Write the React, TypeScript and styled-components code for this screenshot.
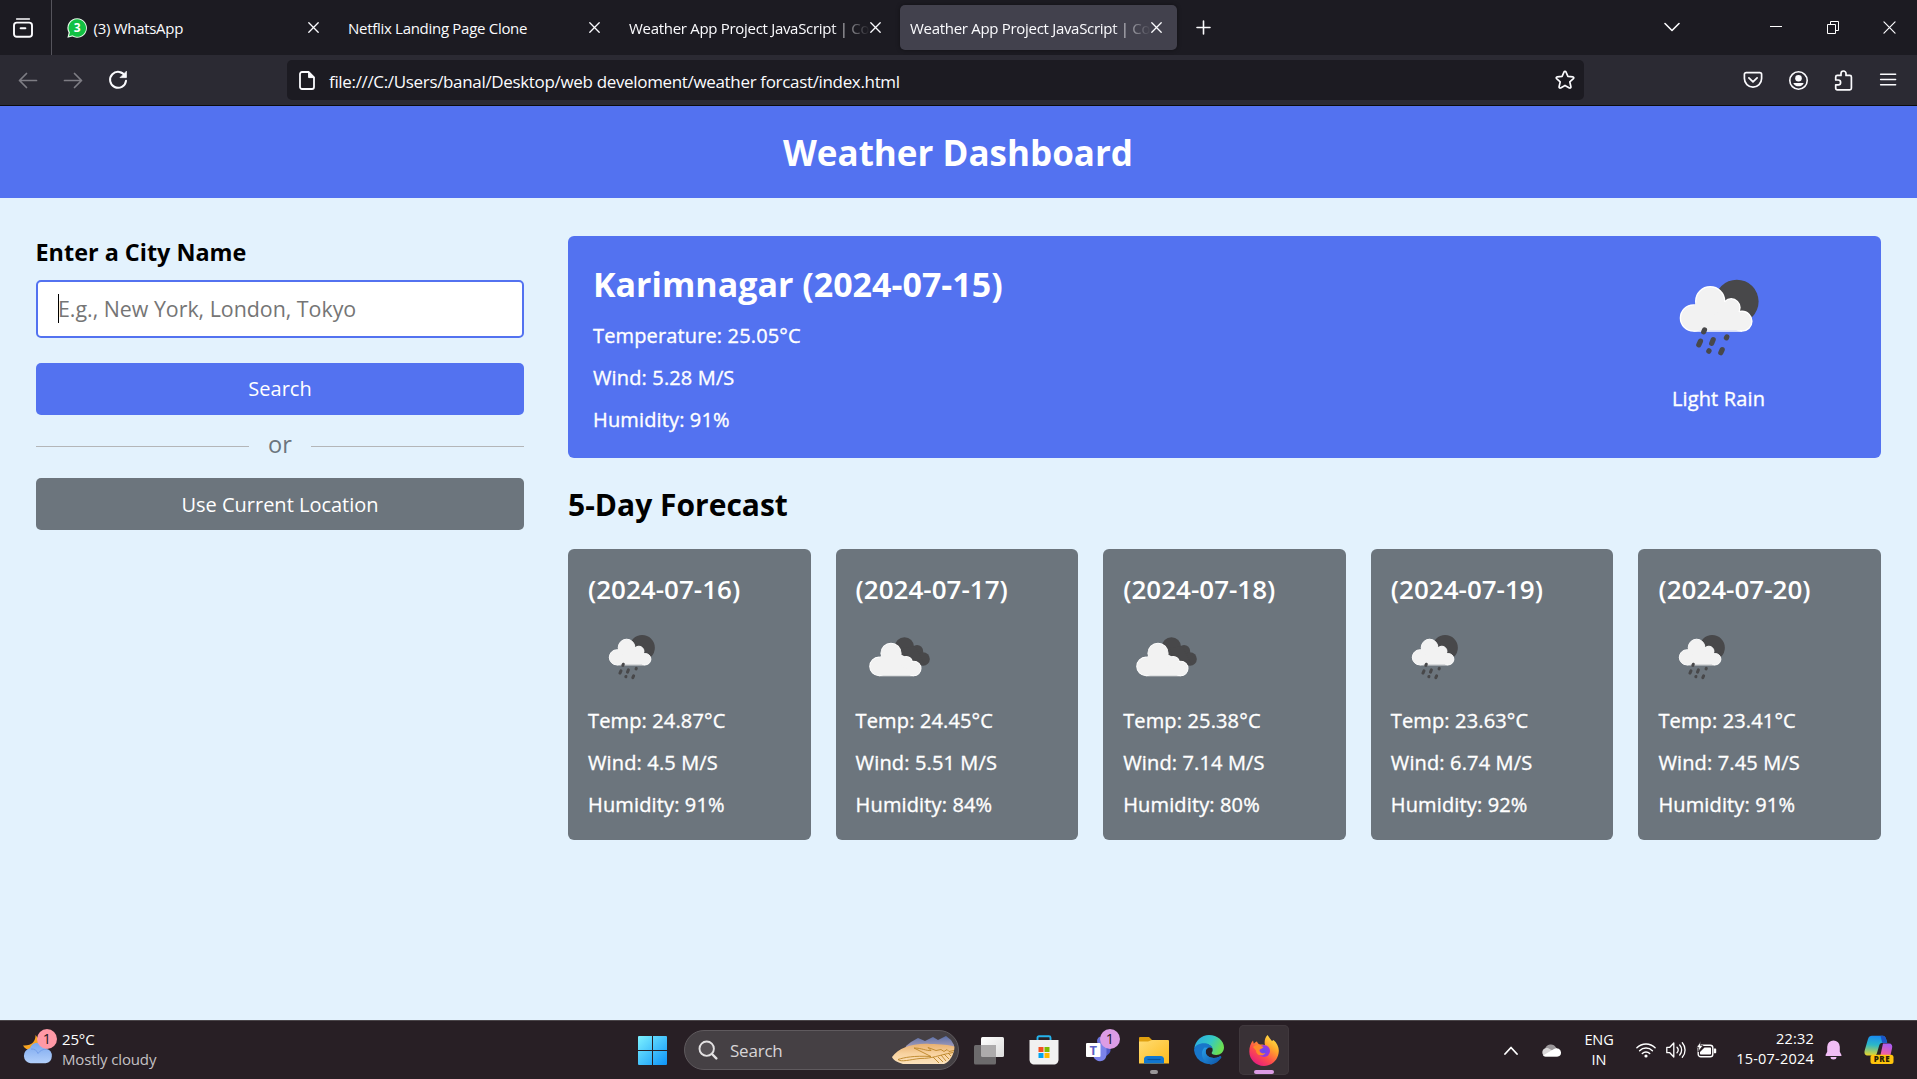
import React from "react";
import styled, { createGlobalStyle } from "styled-components";

const GlobalStyle = createGlobalStyle`
  * { margin: 0; padding: 0; box-sizing: border-box; }
  body { margin: 0; background: #e3f2fd; overflow: hidden; font-family: "Open Sans", sans-serif; }
  svg { display: block; flex: none; }
`;

const Screen = styled.div`
  width: 100vw;
  height: 100vh;
  display: flex;
  flex-direction: column;
  overflow: hidden;
  background: #e3f2fd;
`;

/* ---------- browser chrome ---------- */

const TabStrip = styled.div`
  flex: none;
  height: 55px;
  display: flex;
  align-items: center;
  background: #1c1b22;
  color: #fbfbfe;
`;

const ViewButton = styled.div`
  width: 52px;
  height: 55px;
  padding-left: 13px;
  display: flex;
  align-items: center;
  border-right: 1px solid #55545c;
  margin-right: 5px;
`;

const Tab = styled.div<{ $active?: boolean }>`
  width: 277px;
  height: 45px;
  margin-right: 4px;
  padding: 0 15px 0 10px;
  display: flex;
  align-items: center;
  border-radius: 5px;
  background: ${(p) => (p.$active ? "#42414d" : "transparent")};
  box-shadow: ${(p) => (p.$active ? "0 0 4px rgba(0,0,0,.4)" : "none")};
`;

const TabTitle = styled.span<{ $fade?: boolean }>`
  flex: 1;
  white-space: nowrap;
  font-size: 15px;
  line-height: 24px;
  letter-spacing: ${(p) => (p.$fade ? -0.3 : -0.29)}px;
  ${(p) => p.$fade && "mask-image: linear-gradient(to left, transparent, #000 40px);"}
`;

const TabFavicon = styled.div`
  margin-right: 6.5px;
`;

const NewTab = styled.div`
  margin-left: 15px;
`;

const WindowControls = styled.div`
  margin-left: auto;
  display: flex;
  align-items: center;
  padding: 0 21px 1px 0;
`;

const ControlGap = styled.div<{ $w: number }>`
  width: ${(p) => p.$w}px;
`;

const Toolbar = styled.div`
  flex: none;
  height: 51px;
  display: flex;
  align-items: center;
  background: #2b2a33;
  border-bottom: 1px solid #0c0c0d;
  color: #fbfbfe;
`;

const NavButtons = styled.div`
  width: 287px;
  padding-left: 18px;
  display: flex;
  gap: 25px;
`;

const UrlBar = styled.div`
  width: 1297px;
  height: 40px;
  padding: 0 9px 0 12px;
  display: flex;
  align-items: center;
  border-radius: 5px;
  background: #1c1b22;
`;

const UrlText = styled.span`
  flex: 1;
  margin-left: 14px;
  padding-top: 3px;
  font-size: 17px;
  letter-spacing: -0.335px;
  white-space: nowrap;
`;

const ToolbarIcons = styled.div`
  margin-left: auto;
  padding-right: 19px;
  display: flex;
  gap: 25px;
`;

/* ---------- page ---------- */

const PageTitle = styled.h1`
  flex: none;
  height: 92px;
  padding: 23px 1px 0 0;
  background: #5372f0;
  color: #fff;
  font-size: 35px;
  font-weight: 700;
  line-height: 47px;
  text-align: center;
`;

const Container = styled.div`
  flex: 1;
  min-height: 0;
  display: flex;
  gap: 44px;
  padding: 38px 36px 0;
`;

const InputColumn = styled.div`
  width: 488px;
  display: flex;
  flex-direction: column;
`;

const Label = styled.h3`
  margin-left: -0.5px;
  font-size: 23.4px;
  font-weight: 700;
  line-height: 32px;
`;

const CityField = styled.div`
  height: 58px;
  margin: 12px 0 25px;
  padding-left: 20px;
  display: flex;
  align-items: center;
  border: 2px solid #5372f0;
  border-radius: 5px;
  background: #fff;
`;

const Caret = styled.span`
  width: 1px;
  height: 29px;
  margin: 0 -1px 1px 0;
  background: #000;
`;

const Placeholder = styled.span`
  margin-bottom: 2px;
  font-size: 21.4px;
  line-height: 29px;
  letter-spacing: -0.02px;
  color: #757575;
`;

const Button = styled.div<{ $bg: string; $drop?: number }>`
  height: 52px;
  padding-top: ${(p) => p.$drop ?? 0}px;
  border-radius: 5px;
  background: ${(p) => p.$bg};
  color: #fff;
  font-size: 20px;
  line-height: 52px;
  text-align: center;
`;

const Separator = styled.div`
  height: 63px;
  display: flex;
  align-items: center;
  gap: 19px;
  color: #6c757d;
`;

const Rule = styled.div`
  flex: 1;
  height: 1px;
  background: #b4b6b8;
`;

const Or = styled.span`
  font-size: 23.6px;
  line-height: 32px;
  margin-top: -5px;
`;

const WeatherColumn = styled.div`
  flex: 1;
`;

const CurrentCard = styled.div`
  height: 222px;
  padding: 25px 87.5px 25px 25px;
  display: flex;
  justify-content: space-between;
  border-radius: 6px;
  background: #5372f0;
  color: #fff;
`;

const City = styled.h2`
  font-size: 34px;
  font-weight: 700;
  line-height: 46px;
`;

const Stat = styled.h6`
  margin-top: 15px;
  font-size: 20px;
  font-weight: 500;
  line-height: 27px;
  letter-spacing: 0.14px;
  -webkit-text-stroke: 0.35px #fff;
  white-space: nowrap;
`;

const CurrentIcon = styled.div`
  width: 150px;
  margin-top: -19px;
  text-align: center;
`;

const Condition = styled(Stat)`
  margin-top: -7px;
`;

const ForecastTitle = styled.h2`
  height: 91px;
  padding-top: 25.5px;
  font-size: 30px;
  font-weight: 700;
  line-height: 41px;
`;

const ForecastList = styled.div`
  display: grid;
  grid-template-columns: repeat(5, 1fr);
  gap: 25px;
`;

const ForecastCard = styled.div`
  height: 291px;
  padding: 22px 20px;
  border-radius: 6px;
  background: #6c757d;
  color: #fff;
`;

const ForecastDate = styled.h3`
  font-size: 26px;
  font-weight: 600;
  line-height: 36px;
`;

const ForecastIcon = styled.div`
  height: 85px;
  padding-top: 6.3px;
`;

/* ---------- taskbar ---------- */

const Taskbar = styled.div`
  flex: none;
  height: 59px;
  display: flex;
  align-items: center;
  background: #281f25;
  border-top: 1px solid #4a4549;
  color: #fff;
`;

const Widget = styled.div`
  width: 638px;
  padding-left: 22px;
  display: flex;
  align-items: center;
`;

const WidgetText = styled.div`
  margin: 0 0 3px 4px;
  font-size: 15px;
  line-height: 20px;
  letter-spacing: -0.14px;
`;

const Muted = styled.div`
  color: #c5c1c4;
`;

const SearchPill = styled.div`
  width: 275px;
  height: 40px;
  margin: 0 5px 0 17px;
  padding: 0 3px 0 13px;
  display: flex;
  align-items: center;
  border-radius: 20px;
  border: 1px solid #5f5a5e;
  background: #454044;
`;

const SearchLabel = styled.span`
  flex: 1;
  margin-left: 12px;
  font-size: 17px;
  color: #d8d5d7;
  letter-spacing: -0.22px;
`;

const AppSlot = styled.div<{ $active?: boolean }>`
  width: 50px;
  height: 50px;
  margin-right: 5px;
  position: relative;
  display: flex;
  align-items: center;
  justify-content: center;
  border-radius: 5px;
  background: ${(p) => (p.$active ? "#393136" : "transparent")};
  box-shadow: ${(p) => (p.$active ? "inset 0 0 0 1px #40383d" : "none")};
`;

const RunningMark = styled.div<{ $w: number; $color: string }>`
  position: absolute;
  bottom: 1px;
  width: ${(p) => p.$w}px;
  height: 4px;
  border-radius: 2px;
  background: ${(p) => p.$color};
`;

const Tray = styled.div`
  margin-left: auto;
  padding-right: 23px;
  display: flex;
  align-items: center;
`;

const TrayText = styled.div<{ $align: string; $w: number; $spacing?: number; $lift?: number }>`
  width: ${(p) => p.$w}px;
  margin-bottom: ${(p) => p.$lift ?? 0}px;
  font-size: 14.5px;
  line-height: 20px;
  letter-spacing: ${(p) => p.$spacing ?? 0}px;
  text-align: ${(p) => p.$align};
  white-space: nowrap;
`;

const TrayGap = styled.div<{ $w: number }>`
  width: ${(p) => p.$w}px;
`;

/* ---------- drawings ---------- */

const CloseIcon = ({ s = 11, w = 1.3 }: { s?: number; w?: number }) => (
  <svg width={s} height={s} viewBox="0 0 11 11" stroke="#fbfbfe" strokeWidth={w} strokeLinecap="round">
    <path d="M.8.8l9.4 9.4M10.2.8L.8 10.2" />
  </svg>
);

const RainIcon = ({ size }: { size: number }) => (
  <svg width={size} height={size} viewBox="0 0 150 150">
    <circle cx="92.8" cy="59.5" r="21.8" fill="#48484a" />
    <g fill="#f2f2f2" stroke="#fff" strokeWidth="1.6">
      <circle cx="49.5" cy="76" r="13" />
      <circle cx="66.2" cy="59.3" r="14.4" />
      <circle cx="87.2" cy="65.6" r="8.7" />
      <circle cx="98" cy="79.2" r="9.8" />
      <path d="M49.5 89H98" />
    </g>
    <path fill="#f2f2f2" d="M49.5 64L53 60L79 59L84 62L93 68L96 71V88.4H49.5L44 80Z" />
    <circle cx="49.5" cy="76" r="12.3" fill="#f2f2f2" />
    <circle cx="66.2" cy="59.3" r="13.7" fill="#f2f2f2" />
    <circle cx="87.2" cy="65.6" r="8" fill="#f2f2f2" />
    <circle cx="98" cy="79.2" r="9.1" fill="#f2f2f2" />
    <path
      stroke="#48484a"
      strokeWidth="5.2"
      strokeLinecap="round"
      fill="none"
      d="M60.5 87.9l-.8 2M56.5 99.2l-1.7 3.7M69.2 97.6l-1.5 3.8M82.8 95l-.4.9M65 108.8l-.2.4M78.2 107.6l-1.4 3.1"
    />
  </svg>
);

const CloudsIcon = ({ size }: { size: number }) => (
  <svg width={size} height={size} viewBox="0 0 150 150">
    <g fill="#48484a">
      <circle cx="83" cy="58" r="16.5" />
      <circle cx="104.7" cy="65.4" r="10.4" />
      <circle cx="115" cy="79" r="11.6" />
      <path d="M80 60l22-3 16 32H90z" />
    </g>
    <g fill="#f2f2f2" stroke="#fff" strokeWidth="1.8">
      <circle cx="39.5" cy="91.5" r="15.9" />
      <circle cx="60" cy="69" r="17.2" />
      <circle cx="86" cy="85" r="10.6" />
      <circle cx="99" cy="95" r="12.4" />
      <path d="M39.5 107.4H99" />
    </g>
    <path fill="#f2f2f2" d="M39.5 77L45 71L75 70L86 76L96 87L99 95V106.5H39.5L34 95Z" />
    <circle cx="39.5" cy="91.5" r="15" fill="#f2f2f2" />
    <circle cx="60" cy="69" r="16.3" fill="#f2f2f2" />
    <circle cx="86" cy="85" r="9.8" fill="#f2f2f2" />
    <circle cx="99" cy="95" r="11.5" fill="#f2f2f2" />
  </svg>
);

const ViewIcon = () => (
  <svg width="20" height="20" viewBox="0 0 20 20" fill="none" stroke="#fbfbfe" strokeWidth="1.9" strokeLinecap="round">
    <path d="M3.6 1h12.8" strokeWidth="1.4" />
    <rect x="1" y="4.6" width="18" height="14.2" rx="2.8" />
    <path d="M7.6 10.2h4.8" />
  </svg>
);

const WhatsAppIcon = () => (
  <svg width="20" height="20" viewBox="0 0 20 20">
    <path d="M10.2.2a9.8 9.8 0 1 1-4.8 18.4L.4 19.8l1.2-5A9.8 9.8 0 0 1 10.2.2z" fill="#e8fbea" />
    <path d="M10.2 1.3a8.7 8.7 0 1 1-4.6 16l-3.6 1 .9-3.7A8.7 8.7 0 0 1 10.2 1.3z" fill="#12c143" />
    <text x="10.3" y="14.4" fontSize="12" fontWeight="700" fontFamily="Open Sans" textAnchor="middle" fill="#fff">3</text>
  </svg>
);

const ArrowIcon = ({ flip }: { flip?: boolean }) => (
  <svg width="20" height="20" viewBox="0 0 20 20" fill="none" stroke="#7e7d84" strokeWidth="1.7" strokeLinecap="round" strokeLinejoin="round">
    <path d={flip ? "M1.5 10.5h17M11.5 3.5l7 7-7 7" : "M18.5 10.5h-17M8.5 3.5l-7 7 7 7"} />
  </svg>
);

const ReloadIcon = () => (
  <svg width="20" height="20" viewBox="0 0 20 20" fill="none" stroke="#fbfbfe" strokeWidth="2" strokeLinecap="round">
    <path d="M17.2 6.2A8 8 0 1 0 18 10.8" />
    <path d="M18.4 1.6v6h-6z" fill="#fbfbfe" strokeWidth=".8" strokeLinejoin="round" />
  </svg>
);

const PageIcon = () => (
  <svg width="16" height="19" viewBox="0 0 16 19" fill="none" stroke="#fbfbfe" strokeWidth="1.8" strokeLinejoin="round">
    <path d="M3 1h6.8L15 6.4V16a2 2 0 0 1-2 2H3a2 2 0 0 1-2-2V3a2 2 0 0 1 2-2z" />
    <path d="M9.6 1v5.6H15z" fill="#fbfbfe" strokeWidth="1" />
  </svg>
);

const StarIcon = () => (
  <svg width="20" height="20" viewBox="0 0 20 20" fill="none" stroke="#fbfbfe" strokeWidth="1.7" strokeLinejoin="round">
    <path d="M10 1.3c.5 0 .8.3 1 .7l1.9 4.4 4.9.5c1 .1 1.3 1.1.6 1.8l-3.6 3.2 1.1 4.8c.2 1-.7 1.7-1.5 1.2L10 15.4l-4.4 2.5c-.8.5-1.7-.2-1.5-1.2l1.1-4.8-3.6-3.2c-.7-.7-.4-1.7.6-1.8l4.9-.5L9 2c.2-.4.5-.7 1-.7z" />
  </svg>
);

const PocketIcon = () => (
  <svg width="20" height="20" viewBox="0 0 20 20" fill="none" stroke="#fbfbfe" strokeWidth="1.7" strokeLinecap="round" strokeLinejoin="round">
    <path d="M3.2 2.6h13.6c1 0 1.8.8 1.8 1.8v4.2a8.6 8.6 0 0 1-17.2 0V4.4c0-1 .8-1.8 1.8-1.8z" />
    <path d="M5.9 7.9L10 11.8l4.1-3.9" strokeWidth="1.8" />
  </svg>
);

const AccountIcon = () => (
  <svg width="20" height="20" viewBox="0 0 20 20">
    <circle cx="10.5" cy="10.5" r="8.7" fill="none" stroke="#fbfbfe" strokeWidth="1.6" />
    <circle cx="10.5" cy="8.2" r="3.3" fill="#fbfbfe" />
    <path d="M5.3 12.9h10.4c-.8 2.2-2.8 3.4-5.2 3.4s-4.4-1.2-5.2-3.4z" fill="#fbfbfe" />
  </svg>
);

const ExtensionIcon = () => (
  <svg width="20" height="21" viewBox="0 0 20 21" fill="none" stroke="#fbfbfe" strokeWidth="1.7" strokeLinejoin="round">
    <path d="M8 5.4V3.5a2.5 2.5 0 0 1 5 0v1.9h3.8c1 0 1.6.7 1.6 1.6v11.2c0 1-.6 1.6-1.6 1.6H4.3c-1 0-1.6-.7-1.6-1.6v-3.4h2.5a2.4 2.4 0 0 0 0-4.8H2.7V7c0-1 .6-1.6 1.6-1.6z" />
  </svg>
);

const MenuIcon = () => (
  <svg width="20" height="20" viewBox="0 0 20 20" stroke="#fbfbfe" strokeWidth="1.5" strokeLinecap="round">
    <path d="M2.6 4.2h15M2.6 9.5h15M2.6 14.8h15" />
  </svg>
);

const WeatherWidgetIcon = () => (
  <svg width="36" height="42" viewBox="0 0 36 42">
    <defs>
      <linearGradient id="wc" x1="0" y1="0" x2="0" y2="1">
        <stop offset="0" stopColor="#7aa7ee" />
        <stop offset="1" stopColor="#b3d0fb" />
      </linearGradient>
    </defs>
    <path d="M13.5 6c.3 6-3.5 11-12.5 10.5C4 23 17 23 20 14z" fill="#f8a420" />
    <path d="M8.6 34.3a7.6 7.6 0 0 1-.6-15A8.6 8.6 0 0 1 24.2 19.8 7.4 7.4 0 0 1 23.6 34.3z" fill="url(#wc)" />
    <path d="M9 20a7 7 0 0 1 7 4.5c2-3 5-4.5 9-4.3" fill="none" stroke="#6f9be8" strokeWidth=".9" />
    <circle cx="25" cy="10" r="10" fill="#ff99a6" />
    <text x="25" y="15" fontSize="14.5" fontFamily="Open Sans" textAnchor="middle" fill="#231a1e">1</text>
  </svg>
);

const StartIcon = () => (
  <svg width="29" height="29" viewBox="0 0 29 29">
    <defs>
      <linearGradient id="win" x1="0" y1="0" x2="29" y2="29" gradientUnits="userSpaceOnUse">
        <stop offset="0" stopColor="#7df2ff" />
        <stop offset="1" stopColor="#0d93f8" />
      </linearGradient>
    </defs>
    <path fill="url(#win)" d="M1 0h13v14H0V1a1 1 0 0 1 1-1zM15 0h13a1 1 0 0 1 1 1v13H15zM0 15h14v14H1a1 1 0 0 1-1-1zM15 15h14v13a1 1 0 0 1-1 1H15z" />
  </svg>
);

const SearchIcon = () => (
  <svg width="20" height="20" viewBox="0 0 20 20" fill="none" stroke="#e3e1e2" strokeLinecap="round">
    <circle cx="8.7" cy="8.7" r="7.2" strokeWidth="1.9" fill="#565155" />
    <path d="M14 14l4.3 4.4" strokeWidth="2.4" />
  </svg>
);

const DesertArt = () => (
  <svg width="63" height="30" viewBox="0 0 63 30">
    <defs>
      <linearGradient id="mt" x1="0" y1="0" x2="0" y2="1">
        <stop offset="0" stopColor="#5a6fa8" />
        <stop offset="1" stopColor="#b9a9bd" />
      </linearGradient>
      <linearGradient id="sand" x1="0" y1="0" x2="0" y2="1">
        <stop offset="0" stopColor="#e8b070" />
        <stop offset=".5" stopColor="#f8d3a0" />
        <stop offset="1" stopColor="#fce2bc" />
      </linearGradient>
    </defs>
    <path d="M14 11l5-4 7-4 7 3 8-4 5 3 8-4 5 4 3 5v5H13z" fill="url(#mt)" />
    <path d="M0 22C7 13 20 8 38 9c11 0 19 1 24.500 2.500C62.500 19 58 27 52 29H11C5 27 1 25 0 22z" fill="url(#sand)" />
    <path
      d="M6 24.500c6-2 16-4 33-3l-8-4-9-4.500c8 0 12 3 17 2.500l-3-3 8 3 5-1 3 2 3-2 2 2 5-1M6 24.500c3 3 12 0 22-1 13 0 17-3 33-6M41 22l6 6m-1-6l5 5m-2-7l5 6m-2-7l5 5m-1-6l3 3"
      fill="none"
      stroke="#bb8427"
      strokeWidth=".9"
    />
  </svg>
);

const TaskViewIcon = () => (
  <svg width="30" height="29" viewBox="0 0 30 29">
    <defs>
      <linearGradient id="tv" x1="0" y1="0" x2="1" y2="1">
        <stop offset="0" stopColor="#fff" />
        <stop offset="1" stopColor="#dcdcdc" />
      </linearGradient>
    </defs>
    <rect x="7" y="1" width="23" height="20" rx="1.5" fill="url(#tv)" />
    <rect x="0" y="9" width="22" height="19.5" rx="1.5" fill="#6c6a6c" />
    <path d="M7 9h15v12H8.5a1.5 1.5 0 0 1-1.5-1.5z" fill="#adabac" />
  </svg>
);

const StoreIcon = () => (
  <svg width="30" height="30" viewBox="0 0 30 30">
    <path d="M8.5 7V2.8c0-1 .6-1.500 1.500-1.500h10c1 0 1.500.6 1.500 1.500V7" fill="none" stroke="#25b3ec" strokeWidth="1.9" />
    <path d="M.5 5h29v19.500c0 3-2 5-5 5h-19c-3 0-5-2-5-5z" fill="#f1f1f1" />
    <path fill="#f25022" d="M9.500 12h5v5h-5z" />
    <path fill="#7fba00" d="M15.500 12h5v5h-5z" />
    <path fill="#00a4ef" d="M9.500 18h5v5h-5z" />
    <path fill="#ffb900" d="M15.500 18h5v5h-5z" />
  </svg>
);

const TeamsIcon = () => (
  <svg width="42" height="42" viewBox="0 0 42 42">
    <path d="M24 15h8.500v7a7 7 0 0 1-8.500 5z" fill="#5059c9" />
    <circle cx="23.500" cy="12" r="4.500" fill="#6a72dc" />
    <path d="M15 15h13.500v10c0 9-10.500 9-13 3z" fill="#7b83eb" />
    <rect x="8" y="14" width="14.500" height="14" rx="1" fill="#fff" />
    <text x="15.300" y="25.700" fontSize="13" fontWeight="700" fontFamily="Open Sans" textAnchor="middle" fill="#5b5fc7">T</text>
    <circle cx="32" cy="10" r="10" fill="#dc9ce5" />
    <text x="32" y="15" fontSize="14.500" fontFamily="Open Sans" textAnchor="middle" fill="#231a26">1</text>
  </svg>
);

const FolderIcon = () => (
  <svg width="30" height="28" viewBox="0 0 30 28">
    <defs>
      <linearGradient id="fo" x1="0" y1="0" x2="1" y2="1">
        <stop offset="0" stopColor="#ffdc73" />
        <stop offset="1" stopColor="#fdbb1c" />
      </linearGradient>
    </defs>
    <path d="M0 2a1 1 0 0 1 1-1h9l3 3v7H0z" fill="#e0a00f" />
    <path d="M0 5.500h9l4-1.500h16a1 1 0 0 1 1 1v22.500H0z" fill="url(#fo)" />
    <path d="M5 27.500v-5A3 3 0 0 1 8 20h14a3 3 0 0 1 3 2.500v5z" fill="#1177d1" />
    <path d="M8.500 23.500h13" stroke="#0a559e" strokeWidth="1.2" />
  </svg>
);

const EdgeIcon = () => (
  <svg width="30" height="30" viewBox="0 0 30 30">
    <defs>
      <linearGradient id="e1" x1="0" y1="0" x2="1" y2=".4">
        <stop offset="0" stopColor="#2aa8e8" />
        <stop offset=".6" stopColor="#35c9c4" />
        <stop offset="1" stopColor="#6adf54" />
      </linearGradient>
      <linearGradient id="e2" x1="0" y1="0" x2="1" y2="1">
        <stop offset="0" stopColor="#29a1e8" />
        <stop offset="1" stopColor="#0c4ea3" />
      </linearGradient>
    </defs>
    <path d="M.3 13.500C1.300 5.500 7.500 0 15 0c8.500 0 15 6 15 12.500 0 4.500-3.500 7.500-7.700 7.500-3.400 0-5-1.200-4.600-2.300 2.600-3 .1-8.500-5.700-8.500C6 9.200 1.500 11.500.3 13.500z" fill="url(#e1)" />
    <path d="M0 15C.5 10.500 5 8.300 10 8.300c3.500 0 8 2 8.500 5.200-2-1.900-7-.8-6.800 3.500.2 5 7.300 7.700 13.500 4.700 1.800-.9 2.600.2 1.700 1.400A15 15 0 0 1 0 15z" fill="#1876ca" />
    <path d="M10.500 12.500c-4.500 4-3.500 14 6.500 17.300a15 15 0 0 0 9.900-6.700c.9-1.200.1-2.300-1.700-1.400-6.200 3-13.300.3-13.500-4.700 0-2 1-3.600 2.500-4.200z" fill="url(#e2)" />
  </svg>
);

const FirefoxIcon = () => (
  <svg width="30" height="31" viewBox="0 0 30 31">
    <defs>
      <linearGradient id="f1" x1=".9" y1="0" x2=".2" y2="1">
        <stop offset="0" stopColor="#fff14f" />
        <stop offset=".35" stopColor="#ffa62b" />
        <stop offset=".65" stopColor="#ff4f4a" />
        <stop offset="1" stopColor="#e31587" />
      </linearGradient>
      <radialGradient id="f2">
        <stop offset="0" stopColor="#5b4ff0" />
        <stop offset="1" stopColor="#a033df" />
      </radialGradient>
    </defs>
    <path d="M18.500 0c2 2.500 2.500 4 4.500 6l1.500-1c3.500 3 5.500 7 5.300 11.200C29.500 24.500 23 31 15 31S.3 24.500.3 16.500C.3 12 1.500 8.500 4 5.500l.8 3.200C5.800 7.500 7 6.800 8 6.500c.4 1.500 1.500 2.500 3 3 2-.3 4 .1 5 .8C15 6.500 16 2.500 18.500 0z" fill="url(#f1)" />
    <circle cx="15" cy="16" r="6" fill="url(#f2)" />
    <path d="M4 12c3-2.500 6-2.300 8-1l2.500 1c-1 2-3.500 1.500-4 3 0 3 3 4 6 3-2 3.500-9 3.500-9.500-2.500z" fill="#ff8a2a" />
  </svg>
);

const OneDriveIcon = () => (
  <svg width="20" height="14" viewBox="0 0 20 14">
    <path d="M4 6A6 6 0 0 1 15 4.500L18 8 9 12z" fill="#9b979a" />
    <path d="M4.500 13.500a4.300 4.300 0 0 1 0-8.300c2-.4 4 .4 5 1.300l9.500 4.200c-.4 1.800-1.700 2.800-3.500 2.800z" fill="#d9d7d8" />
    <path d="M2 12.500L13 6a4.500 4.500 0 0 1 7 4c0 2-1.500 3.500-3.500 3.500h-12c-1 0-2-.4-2.500-1z" fill="#fff" />
  </svg>
);

const WifiIcon = () => (
  <svg width="20" height="16" viewBox="0 0 20 16" fill="none" stroke="#fff" strokeWidth="1.4" strokeLinecap="round">
    <path d="M.9 5.800a12.900 12.900 0 0 1 18.200 0M3.600 8.700a9 9 0 0 1 12.800 0M6.300 11.500a5.200 5.200 0 0 1 7.400 0" />
    <circle cx="10" cy="14" r="1.6" fill="#fff" stroke="none" />
  </svg>
);

const VolumeIcon = () => (
  <svg width="20" height="18" viewBox="0 0 20 18" fill="none" stroke="#fff" strokeWidth="1.3" strokeLinecap="round" strokeLinejoin="round">
    <path d="M.8 6.300h3l4-4.300v14l-4-4.300h-3zM11 6.300a4 4 0 0 1 0 5.400M13.700 4a7.500 7.500 0 0 1 0 10M16.300 1.700a11 11 0 0 1 0 14.600" />
  </svg>
);

const BatteryIcon = () => (
  <svg width="21" height="19" viewBox="0 0 21 19">
    <rect x="2.2" y="4.2" width="14.6" height="11.6" rx="2.6" fill="none" stroke="#fff" strokeWidth="1.4" />
    <path d="M17.800 7.500h1.400c.6 0 1 .4 1 1v2.800c0 .6-.4 1-1 1h-1.400z" fill="#fff" />
    <path d="M8.500 6.500h5.500c.7 0 1 .4 1 1v5.100c0 .7-.3 1-1 1H5c-.6 0-1-.3-1-1V11z" fill="#fff" />
    <path d="M4.800.3L.5 6.500h2.300L2 11l5-6.500H4.300z" fill="#fff" stroke="#281f25" strokeWidth=".7" />
  </svg>
);

const BellIcon = () => (
  <svg width="17" height="20" viewBox="0 0 17 20" fill="#f1bdf5">
    <path d="M8.500.5a6.300 6.300 0 0 1 6.300 6.300v5l1.700 3.300c.2.500 0 .9-.6.900H1.100c-.6 0-.8-.4-.6-.9l1.700-3.300v-5A6.300 6.300 0 0 1 8.500.5zM5.500 17h6a3 2.500 0 0 1-6 0z" />
  </svg>
);

const CopilotIcon = () => (
  <svg width="30" height="30" viewBox="0 0 30 30">
    <defs>
      <linearGradient id="c1" x1=".3" y1="0" x2=".2" y2="1">
        <stop offset="0" stopColor="#1a8cf0" />
        <stop offset=".45" stopColor="#2bb8c8" />
        <stop offset="1" stopColor="#e8d52a" />
      </linearGradient>
      <linearGradient id="c2" x1=".6" y1="0" x2=".3" y2="1">
        <stop offset="0" stopColor="#a95cf2" />
        <stop offset=".6" stopColor="#ee5fa5" />
        <stop offset="1" stopColor="#ff9a60" />
      </linearGradient>
    </defs>
    <path d="M8 .8h10.500c2.500 0 3.300 2 4 4.500l.7 2.500h-4.500c-2 0-3 1-3.600 3L13 18c-.5 1.800-1.500 2.500-3.300 2.500H4c-3 0-4-2-3.300-5L4 4C4.700 1.800 6 .8 8 .8z" fill="url(#c1)" />
    <path d="M16.500.8h2c2.500 0 3.300 2 4 4.500l.7 2.500h-5z" fill="#1b57c8" />
    <path d="M19 8.500h6c2.800 0 3.800 2 3 5l-1.500 6.500-2 5H13c2.500-1 3-3 3.600-5.500l1.400-6.500z" fill="url(#c2)" />
    <rect x="6.5" y="19.8" width="23" height="9.2" rx="2.5" fill="#ffc40c" />
    <text x="18" y="27.300" fontSize="8" fontWeight="800" fontFamily="Open Sans" textAnchor="middle" letterSpacing=".5" fill="#2a2006">PRE</text>
  </svg>
);

/* ---------- data ---------- */

const tabs = [
  { title: "(3) WhatsApp", icon: true },
  { title: "Netflix Landing Page Clone" },
  { title: "Weather App Project JavaScript | Co", fade: true },
  { title: "Weather App Project JavaScript | Co", fade: true, active: true },
];

const forecast = [
  { date: "2024-07-16", rain: true, temp: "24.87", wind: "4.5", humidity: 91 },
  { date: "2024-07-17", rain: false, temp: "24.45", wind: "5.51", humidity: 84 },
  { date: "2024-07-18", rain: false, temp: "25.38", wind: "7.14", humidity: 80 },
  { date: "2024-07-19", rain: true, temp: "23.63", wind: "6.74", humidity: 92 },
  { date: "2024-07-20", rain: true, temp: "23.41", wind: "7.45", humidity: 91 },
];

export default function App() {
  return (
    <Screen>
      <GlobalStyle />
      <TabStrip>
        <ViewButton>
          <ViewIcon />
        </ViewButton>
        {tabs.map((t, i) => (
          <Tab key={i} $active={t.active}>
            {t.icon && (
              <TabFavicon>
                <WhatsAppIcon />
              </TabFavicon>
            )}
            <TabTitle $fade={t.fade}>{t.title}</TabTitle>
            <CloseIcon />
          </Tab>
        ))}
        <NewTab>
          <svg width="15" height="15" viewBox="0 0 15 15" stroke="#fbfbfe" strokeWidth="1.6" strokeLinecap="round">
            <path d="M7.500 1v13M1 7.500h13" />
          </svg>
        </NewTab>
        <WindowControls>
          <svg width="16" height="10" viewBox="0 0 16 10" fill="none" stroke="#fbfbfe" strokeWidth="1.6" strokeLinecap="round" strokeLinejoin="round">
            <path d="M1 1.500l7 7 7-7" />
          </svg>
          <ControlGap $w={90} />
          <svg width="12" height="3" viewBox="0 0 12 3">
            <path d="M0 0h12v1H0z" fill="#fff" />
          </svg>
          <ControlGap $w={45} />
          <svg width="12" height="13" viewBox="0 0 12 13" fill="none" stroke="#fff">
            <path d="M.5 3.500h8v9h-8zM3.500 3.500v-3h8v9h-3" />
          </svg>
          <ControlGap $w={44} />
          <CloseIcon s={13} w={1} />
        </WindowControls>
      </TabStrip>
      <Toolbar>
        <NavButtons>
          <ArrowIcon />
          <ArrowIcon flip />
          <ReloadIcon />
        </NavButtons>
        <UrlBar>
          <PageIcon />
          <UrlText>file:///C:/Users/banal/Desktop/web develoment/weather forcast/index.html</UrlText>
          <StarIcon />
        </UrlBar>
        <ToolbarIcons>
          <PocketIcon />
          <AccountIcon />
          <ExtensionIcon />
          <MenuIcon />
        </ToolbarIcons>
      </Toolbar>

      <PageTitle>Weather Dashboard</PageTitle>
      <Container>
        <InputColumn>
          <Label>Enter a City Name</Label>
          <CityField>
            <Caret />
            <Placeholder>E.g., New York, London, Tokyo</Placeholder>
          </CityField>
          <Button $bg="#5372f0">Search</Button>
          <Separator>
            <Rule />
            <Or>or</Or>
            <Rule />
          </Separator>
          <Button $bg="#6c757d" $drop={1}>Use Current Location</Button>
        </InputColumn>
        <WeatherColumn>
          <CurrentCard>
            <div>
              <City>Karimnagar (2024-07-15)</City>
              <Stat>Temperature: 25.05°C</Stat>
              <Stat>Wind: 5.28 M/S</Stat>
              <Stat>Humidity: 91%</Stat>
            </div>
            <CurrentIcon>
              <RainIcon size={150} />
              <Condition>Light Rain</Condition>
            </CurrentIcon>
          </CurrentCard>
          <ForecastTitle>5-Day Forecast</ForecastTitle>
          <ForecastList>
            {forecast.map((d) => (
              <ForecastCard key={d.date}>
                <ForecastDate>({d.date})</ForecastDate>
                <ForecastIcon>{d.rain ? <RainIcon size={87.5} /> : <CloudsIcon size={87.5} />}</ForecastIcon>
                <Stat>Temp: {d.temp}°C</Stat>
                <Stat>Wind: {d.wind} M/S</Stat>
                <Stat>Humidity: {d.humidity}%</Stat>
              </ForecastCard>
            ))}
          </ForecastList>
        </WeatherColumn>
      </Container>

      <Taskbar>
        <Widget>
          <WeatherWidgetIcon />
          <WidgetText>
            <div>25°C</div>
            <Muted>Mostly cloudy</Muted>
          </WidgetText>
        </Widget>
        <StartIcon />
        <SearchPill>
          <SearchIcon />
          <SearchLabel>Search</SearchLabel>
          <DesertArt />
        </SearchPill>
        <AppSlot>
          <TaskViewIcon />
        </AppSlot>
        <AppSlot>
          <StoreIcon />
        </AppSlot>
        <AppSlot>
          <TeamsIcon />
        </AppSlot>
        <AppSlot>
          <FolderIcon />
          <RunningMark $w={8} $color="#9a9699" />
        </AppSlot>
        <AppSlot>
          <EdgeIcon />
        </AppSlot>
        <AppSlot $active>
          <FirefoxIcon />
          <RunningMark $w={20} $color="#dc9ce5" />
        </AppSlot>
        <Tray>
          <svg width="14" height="9" viewBox="0 0 14 9" fill="none" stroke="#fff" strokeWidth="1.8" strokeLinecap="round" strokeLinejoin="round">
            <path d="M1 8l6-6.500L13 8" />
          </svg>
          <TrayGap $w={23} />
          <OneDriveIcon />
          <TrayGap $w={18} />
          <TrayText $w={40} $align="center" $spacing={-0.1} $lift={1}>
            ENG
            <br />
            IN
          </TrayText>
          <TrayGap $w={17} />
          <WifiIcon />
          <TrayGap $w={10} />
          <VolumeIcon />
          <TrayGap $w={10} />
          <BatteryIcon />
          <TrayGap $w={17} />
          <TrayText $w={80} $align="right" $spacing={0.22} $lift={2}>
            22:32
            <br />
            15-07-2024
          </TrayText>
          <TrayGap $w={11} />
          <BellIcon />
          <TrayGap $w={22} />
          <CopilotIcon />
        </Tray>
      </Taskbar>
    </Screen>
  );
}
